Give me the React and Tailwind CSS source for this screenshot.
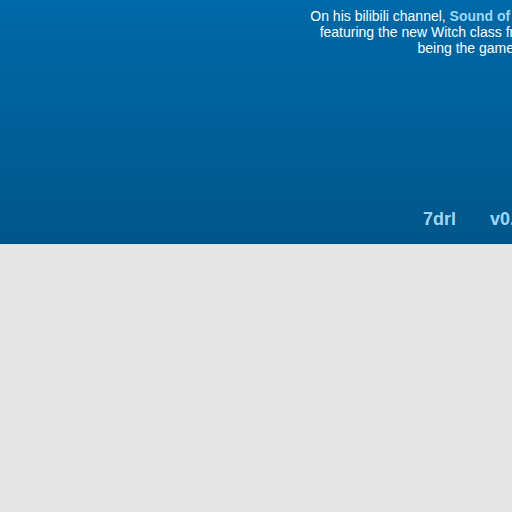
export default function App() {
  return (
    <main
      className="min-h-screen w-[512px] overflow-hidden bg-[#e5e5e5]"
      style={{ fontFamily: '"Liberation Sans", Arial, sans-serif' }}
    >
      {/* Banner */}
      <header className="h-[244px] w-[512px] overflow-hidden bg-gradient-to-b from-[#0069a8] to-[#00568a] border-b border-[#004f7c]">
        <div className="flex w-[1000px] flex-col h-full">
          <div className="ml-[249px] w-[500px] pt-[8px] text-center text-[14px] leading-[16px] text-white">
            <p>
              On his bilibili channel,{" "}
              <a className="font-bold text-[#9fd6f5]">Sound of Dawn</a>{" "}
              released a new video
              <br />
              featuring the new Witch class from v0.9, with its new skills
              <br />
              being the game's headline
            </p>
          </div>
          <nav className="mt-auto mb-[10px] ml-[423px] flex gap-[34px] text-[18px] font-bold text-[#9fd6f5]">
            <a>7drl</a>
            <a>v0.9</a>
            <a>changelog</a>
          </nav>
        </div>
      </header>
    </main>
  );
}
